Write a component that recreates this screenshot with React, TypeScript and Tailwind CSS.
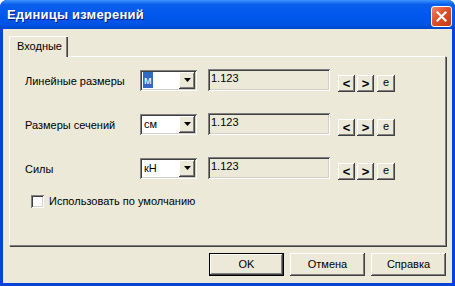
import React from 'react';

const raised =
  'bg-[#ECE9D8] shadow-[inset_-1px_-1px_0_#404040,inset_1px_1px_0_#ffffff,inset_-2px_-2px_0_#808080,inset_2px_2px_0_#ECE9D8]';
const sunken =
  'shadow-[inset_1px_1px_0_#808080,inset_-1px_-1px_0_#ffffff,inset_2px_2px_0_#404040,inset_-2px_-2px_0_#D4D0C8]';

const rows = [
  { label: 'Линейные размеры', unit: 'м', selected: true },
  { label: 'Размеры сечений', unit: 'см', selected: false },
  { label: 'Силы', unit: 'кН', selected: false },
];

function Combo({ unit, selected }: { unit: string; selected: boolean }) {
  return (
    <div className={`w-[57px] h-[21px] bg-white flex items-center p-[2px] ${sunken}`}>
      <div className="flex-1 pl-[1px] flex items-center">
        <span className={selected ? 'bg-[#316AC5] text-white px-[1px]' : 'px-[1px]'}>{unit}</span>
      </div>
      <div className={`w-[16px] h-[17px] flex items-center justify-center ${raised}`}>
        <svg width="7" height="4" viewBox="0 0 7 4">
          <path d="M0 0h7L3.5 4z" fill="#000" />
        </svg>
      </div>
    </div>
  );
}

function SmallBtn({ children }: { children: React.ReactNode }) {
  return (
    <div className={`h-[17px] flex items-center justify-center ${raised}`}>{children}</div>
  );
}

export default function App() {
  return (
    <div
      className="w-[455px] h-[286px] flex flex-col rounded-t-[7px] bg-[#0842D6] overflow-hidden text-[11px] text-black"
      style={{ fontFamily: '"Liberation Sans", Arial, sans-serif' }}
    >
      {/* title bar */}
      <div className="h-[29px] shrink-0 flex items-center pl-[7px] pr-[3px] bg-[linear-gradient(to_bottom,#3D95FF_0%,#0A5FEB_15%,#0058EE_50%,#0054E3_85%,#0046C8_100%)]">
        <span className="flex-1 text-white font-bold text-[13px] tracking-[0.2px] [text-shadow:1px_1px_0_#0A1883]">
          Единицы измерений
        </span>
        <div className="w-[21px] h-[21px] mt-[3px] rounded-[3px] border border-white bg-[linear-gradient(135deg,#EE8866_0%,#E0502A_45%,#C23A14_100%)] flex items-center justify-center">
          <svg width="11" height="11" viewBox="0 0 11 11">
            <path d="M1.5 1.5l8 8M9.5 1.5l-8 8" stroke="#fff" strokeWidth="2.2" strokeLinecap="square" />
          </svg>
        </div>
      </div>

      {/* body */}
      <div className="flex-1 mx-[3px] mb-[3px] bg-[#ECE9D8] flex flex-col pl-[6px] pr-[6px] pt-[7px]">
        {/* tab */}
        <div className="flex">
          <div className="w-[59px] h-[21px] -mb-[1px] z-10 bg-[#ECE9D8] border-l border-t border-white rounded-tl-[2px] shadow-[inset_-1px_0_0_#404040,inset_-2px_0_0_#808080] flex items-center pl-[7px] pb-[1px]">
            Входные
          </div>
        </div>

        {/* tab panel */}
        <div className="h-[190px] border-l border-t border-white border-r border-b border-r-[#808080] border-b-[#808080] shadow-[1px_1px_0_#404040] flex flex-col pt-[12px] pl-[15px]">
          <div className="flex flex-col gap-[22px]">
            {rows.map((r) => (
              <div key={r.label} className="flex items-center h-[22px]">
                <div className="w-[115px] pt-[3px]">{r.label}</div>
                <Combo unit={r.unit} selected={r.selected} />
                <div className={`ml-[11px] w-[122px] h-[22px] flex items-center pl-[3px] pb-[3px] ${sunken}`}>
                  1.123
                </div>
                <div className="ml-[8px] mt-[6px] flex">
                  <div className="w-[17px]">
                    <SmallBtn><span className="font-bold text-[13px] leading-none">&lt;</span></SmallBtn>
                  </div>
                  <div className="w-[17px] ml-[2px]">
                    <SmallBtn><span className="font-bold text-[13px] leading-none">&gt;</span></SmallBtn>
                  </div>
                  <div className="w-[18px] ml-[3px]">
                    <SmallBtn><span className="leading-none pb-[1px]">e</span></SmallBtn>
                  </div>
                </div>
              </div>
            ))}
          </div>

          <div className="flex items-center mt-[14px] pl-[6px]">
            <div className={`w-[13px] h-[13px] bg-white ${sunken}`} />
            <span className="ml-[5px]">Использовать по умолчанию</span>
          </div>
        </div>

        {/* buttons */}
        <div className="flex justify-end gap-[6px] mt-[7px]">
          <div className="w-[75px] h-[23px] border border-black flex items-center justify-center bg-[#ECE9D8] shadow-[inset_-1px_-1px_0_#404040,inset_1px_1px_0_#ffffff,inset_-2px_-2px_0_#808080]">
            OK
          </div>
          <div className={`w-[75px] h-[23px] flex items-center justify-center ${raised}`}>Отмена</div>
          <div className={`w-[75px] h-[23px] flex items-center justify-center ${raised}`}>Справка</div>
        </div>
      </div>
    </div>
  );
}
